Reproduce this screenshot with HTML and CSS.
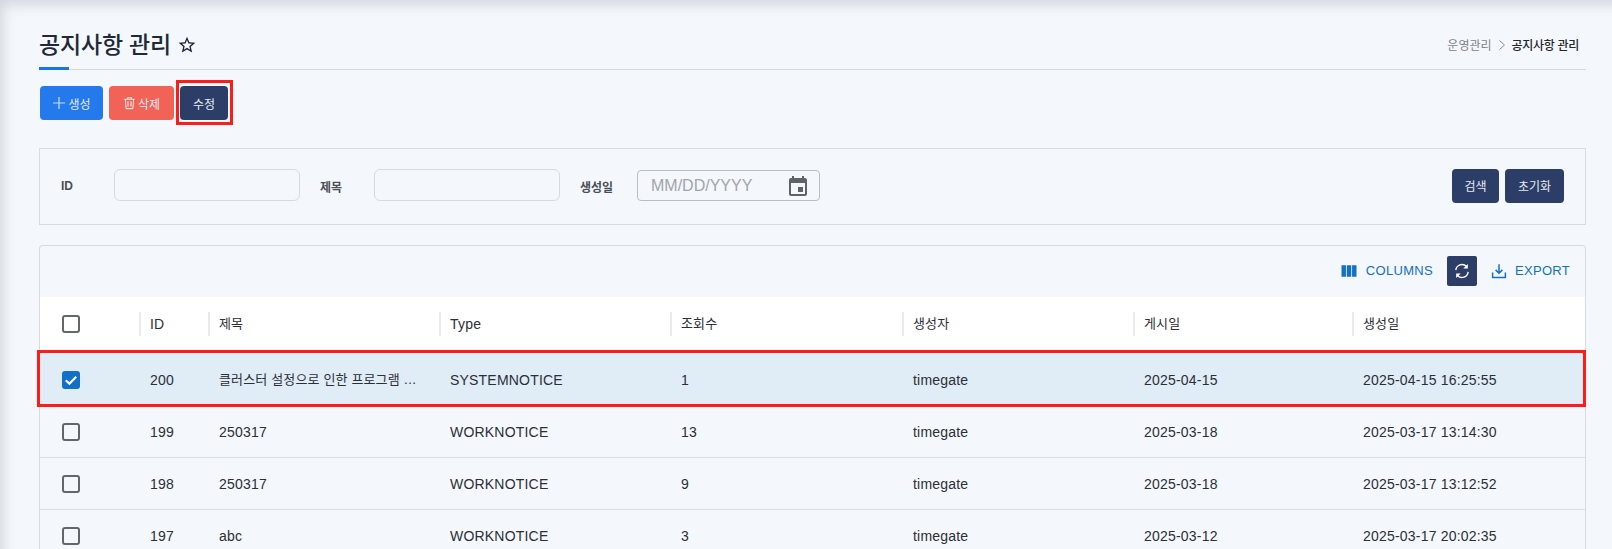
FILE: index.html
```html
<!DOCTYPE html>
<html lang="ko">
<head>
<meta charset="utf-8">
<title>공지사항 관리</title>
<link rel="stylesheet" href="styles.css">
</head>
<body>
<div class="page">
  <header class="page-head">
    <div class="title-wrap">
      <h1 class="title">공지사항 관리</h1>
      <svg class="star" viewBox="0 0 24 24" width="20" height="20"><path d="M22 9.24l-7.19-.62L12 2 9.19 8.63 2 9.24l5.46 4.73L5.82 21 12 17.27 18.18 21l-1.63-7.03L22 9.24zM12 15.4l-3.76 2.27 1-4.28-3.32-2.88 4.38-.38L12 6.1l1.71 4.04 4.38.38-3.32 2.88 1 4.28L12 15.4z" fill="#1c2433"/></svg>
    </div>
    <nav class="crumbs">
      <span class="crumb">운영관리</span>
      <svg class="crumb-sep" viewBox="0 0 10 12" width="10" height="12"><path d="M2.5 1.5L7.5 6l-5 4.5" fill="none" stroke="#8a9098" stroke-width="1"/></svg>
      <span class="crumb-now">공지사항 관리</span>
    </nav>
  </header>

  <div class="actions">
    <button class="btn btn-blue btn-create">
      <svg viewBox="0 0 14 14" width="14" height="14"><path d="M7 1v12M1 7h12" stroke="#c9dcf7" stroke-width="1.2" fill="none"/></svg>
      생성
    </button>
    <button class="btn btn-red btn-delete">
      <svg viewBox="0 0 14 14" width="13" height="14"><path d="M5 2.5V1.3h4v1.2M1.3 3h11.4M2.6 3l.6 9.2c0 .6.4.9.9.9h5.8c.5 0 .9-.3.9-.9l.6-9.2M5.4 5.2v5.8M8.6 5.2v5.8" stroke="#fbe6e3" stroke-width="1.2" fill="none"/></svg>
      삭제
    </button>
    <span class="mark-btn"><button class="btn btn-navy btn-edit">수정</button></span>
  </div>

  <section class="filter">
    <label class="f-label f-id">ID</label>
    <span class="f-input"></span>
    <label class="f-label f-title">제목</label>
    <span class="f-input"></span>
    <label class="f-label f-date">생성일</label>
    <span class="f-datebox">
      <span class="f-placeholder">MM/DD/YYYY</span>
      <svg viewBox="0 0 24 24" width="24" height="24"><path d="M19 4h-1V2h-2v2H8V2H6v2H5c-1.1 0-2 .9-2 2v14c0 1.1.9 2 2 2h14c1.1 0 2-.9 2-2V6c0-1.1-.9-2-2-2zm0 16H5V9h14v11zM12 13h5v5h-5z" fill="#5f6368"/></svg>
    </span>
    <div class="f-buttons">
      <button class="btn btn-navy btn-search">검색</button>
      <button class="btn btn-navy btn-reset">초기화</button>
    </div>
  </section>

  <section class="grid-card">
    <div class="toolbar">
      <span class="tool">
        <svg viewBox="0 0 24 24" width="20" height="20"><path d="M14.67 5v14H9.33V5h5.34zm1 14H21V5h-5.33v14zm-7.34 0V5H3v14h5.33z" fill="#1170c8"/></svg>
        COLUMNS
      </span>
      <span class="refresh">
        <svg viewBox="0 0 24 24" width="20" height="20"><path d="M4.6 11a7.5 7.5 0 0 1 12.7-4.6M19.4 13a7.5 7.5 0 0 1-12.7 4.6" fill="none" stroke="#fff" stroke-width="1.6"/><path d="M19 3.5V9h-5.5zM5 20.5V15h5.5z" fill="#fff"/></svg>
      </span>
      <span class="tool">
        <svg viewBox="0 0 24 24" width="18" height="18"><path d="M12 3v12M7.5 10.5L12 15l4.5-4.5M3.5 14v6.5h17V14" fill="none" stroke="#1170c8" stroke-width="2"/></svg>
        EXPORT
      </span>
    </div>

    <div class="row head">
      <div class="cell check"><span class="box"></span></div>
      <div class="cell sep">ID</div>
      <div class="cell sep ko">제목</div>
      <div class="cell sep">Type</div>
      <div class="cell sep ko">조회수</div>
      <div class="cell sep ko">생성자</div>
      <div class="cell sep ko">게시일</div>
      <div class="cell sep ko">생성일</div>
    </div>

    <div class="row selected">
      <div class="cell check">
        <span class="box on"><svg viewBox="0 0 18 18" width="18" height="18"><path d="M3.8 9.2l3.6 3.5 6.8-7" fill="none" stroke="#fff" stroke-width="2.2"/></svg></span>
      </div>
      <div class="cell">200</div>
      <div class="cell ko">클러스터 설정으로 인한 프로그램 …</div>
      <div class="cell">SYSTEMNOTICE</div>
      <div class="cell">1</div>
      <div class="cell">timegate</div>
      <div class="cell">2025-04-15</div>
      <div class="cell">2025-04-15 16:25:55</div>
    </div>

    <div class="row">
      <div class="cell check"><span class="box"></span></div>
      <div class="cell">199</div>
      <div class="cell">250317</div>
      <div class="cell">WORKNOTICE</div>
      <div class="cell">13</div>
      <div class="cell">timegate</div>
      <div class="cell">2025-03-18</div>
      <div class="cell">2025-03-17 13:14:30</div>
    </div>

    <div class="row">
      <div class="cell check"><span class="box"></span></div>
      <div class="cell">198</div>
      <div class="cell">250317</div>
      <div class="cell">WORKNOTICE</div>
      <div class="cell">9</div>
      <div class="cell">timegate</div>
      <div class="cell">2025-03-18</div>
      <div class="cell">2025-03-17 13:12:52</div>
    </div>

    <div class="row">
      <div class="cell check"><span class="box"></span></div>
      <div class="cell">197</div>
      <div class="cell">abc</div>
      <div class="cell">WORKNOTICE</div>
      <div class="cell">3</div>
      <div class="cell">timegate</div>
      <div class="cell">2025-03-12</div>
      <div class="cell">2025-03-17 20:02:35</div>
    </div>
  </section>
</div>
</body>
</html>
```

FILE: styles.css
```css
* { box-sizing: border-box; }
html, body { margin: 0; height: 100%; }
body {
  background: #f4f8fc;
  font-family: "Liberation Sans", "Noto Sans CJK KR", sans-serif;
  color: #2b2f36;
  overflow: hidden;
  box-shadow: inset 10px 12px 14px -8px rgba(60, 70, 85, 0.2);
}
.page { padding: 26px 26px 0 39px; }

.page-head {
  height: 44px;
  display: flex;
  justify-content: space-between;
  align-items: center;
  border-bottom: 1px solid #d5d9de;
  position: relative;
  padding-bottom: 6px;
}
.page-head::after {
  content: "";
  position: absolute;
  left: 0;
  bottom: -1px;
  width: 30px;
  height: 3px;
  background: #1a76e3;
}
.title-wrap { display: flex; align-items: center; gap: 6px; }
.title {
  margin: 0;
  font-size: 23px;
  font-weight: 500;
  color: #1f2937;
  line-height: 32px;
  letter-spacing: -0.2px;
}
.crumbs { display: flex; align-items: center; gap: 5px; margin-right: 7px; font-size: 12px; }
.crumb { color: #7d838b; }
.crumb-now { color: #23272d; font-weight: 500; letter-spacing: -0.3px; }

.actions {
  display: flex;
  align-items: center;
  gap: 6px;
  margin: 16px 0 0 1px;
}
.btn {
  height: 34px;
  border: 0;
  border-radius: 4px;
  color: #e6ebf3;
  font-family: inherit;
  font-size: 12px;
  display: inline-flex;
  align-items: center;
  justify-content: center;
  gap: 2px;
  padding: 0;
}
.btn-blue { background: #2479ec; }
.btn-red { background: #f26257; }
.btn-navy { background: #2c3e68; }
.btn-create { width: 63px; }
.btn-delete { width: 65px; }
.btn-edit { width: 48px; display: flex; }
.mark-btn {
  display: block;
  width: 48px;
  position: relative;
}
.mark-btn::after {
  content: "";
  position: absolute;
  left: -4px;
  right: -5px;
  top: -6px;
  bottom: -5px;
  border: 3px solid #fb1d16;
}

.filter {
  margin-top: 28px;
  height: 77px;
  border: 1px solid #d8dbdf;
  display: flex;
  align-items: center;
  font-size: 12px;
  font-weight: 500;
  color: #4a4f57;
  padding: 0 21px 1px 21px;
}
.f-label { display: block; font-weight: 700; }
.f-id { width: 53px; }
.f-title { width: 54px; margin-left: 20px; }
.f-date { width: 57px; margin-left: 20px; }
.f-input {
  width: 186px;
  height: 32px;
  border: 1px solid #d6dbe0;
  border-radius: 6px;
  margin-bottom: 2px;
}
.f-datebox {
  width: 183px;
  height: 31px;
  border: 1px solid #b9bec4;
  border-radius: 4px;
  margin-bottom: 1px;
  display: flex;
  align-items: center;
  justify-content: space-between;
  padding: 0 9px 0 13px;
}
.f-placeholder { font-size: 16px; font-weight: 400; color: #a0a5ab; }
.f-buttons { margin-left: auto; display: flex; gap: 6px; margin-bottom: 1px; }
.btn-search { width: 47px; }
.btn-reset { width: 59px; }

.grid-card {
  margin-top: 20px;
  border: 1px solid #d8dbdf;
  border-bottom: 0;
  border-radius: 4px 4px 0 0;
  font-size: 14px;
}
.toolbar {
  height: 51px;
  display: flex;
  align-items: center;
  justify-content: flex-end;
  padding: 0 15px 2px 0;
  color: #1170c8;
}
.tool { display: inline-flex; align-items: center; gap: 7px; font-size: 13px; letter-spacing: 0.3px; }
.refresh {
  width: 30px;
  height: 30px;
  background: #2c3e68;
  border-radius: 2px;
  display: inline-flex;
  align-items: center;
  justify-content: center;
  margin: 0 13px 0 14px;
}

.row {
  display: grid;
  grid-template-columns: 99px 69px 231px 231px 232px 231px 219px 1fr;
  height: 52px;
  align-items: center;
  border-bottom: 1px solid #d9dfe6;
}
.head {
  height: 56px;
  background: #fff;
  border-bottom: 0;
  padding-bottom: 2px;
}
.cell {
  padding-left: 11px;
  white-space: nowrap;
  overflow: hidden;
  color: #2b2f36;
  line-height: 24px;
  letter-spacing: 0.2px;
}
.ko { font-size: 13px; letter-spacing: 0.15px; }
.sep { border-left: 2px solid #e8eaec; padding-left: 9px; }
.check { padding-left: 22px; height: 18px; display: flex; overflow: visible; }
.box {
  width: 18px;
  height: 18px;
  border: 2px solid #63676d;
  border-radius: 3px;
  display: block;
}
.box.on { background: #1170c8; border: 0; }
.box.on svg { display: block; }
.selected {
  height: 53px;
  background: #e0ecf6;
  border-bottom: 0;
  position: relative;
}
.selected::after {
  content: "";
  position: absolute;
  left: -3px;
  right: -1px;
  top: -3px;
  bottom: -1px;
  border: 3px solid #fb1d16;
}
```
